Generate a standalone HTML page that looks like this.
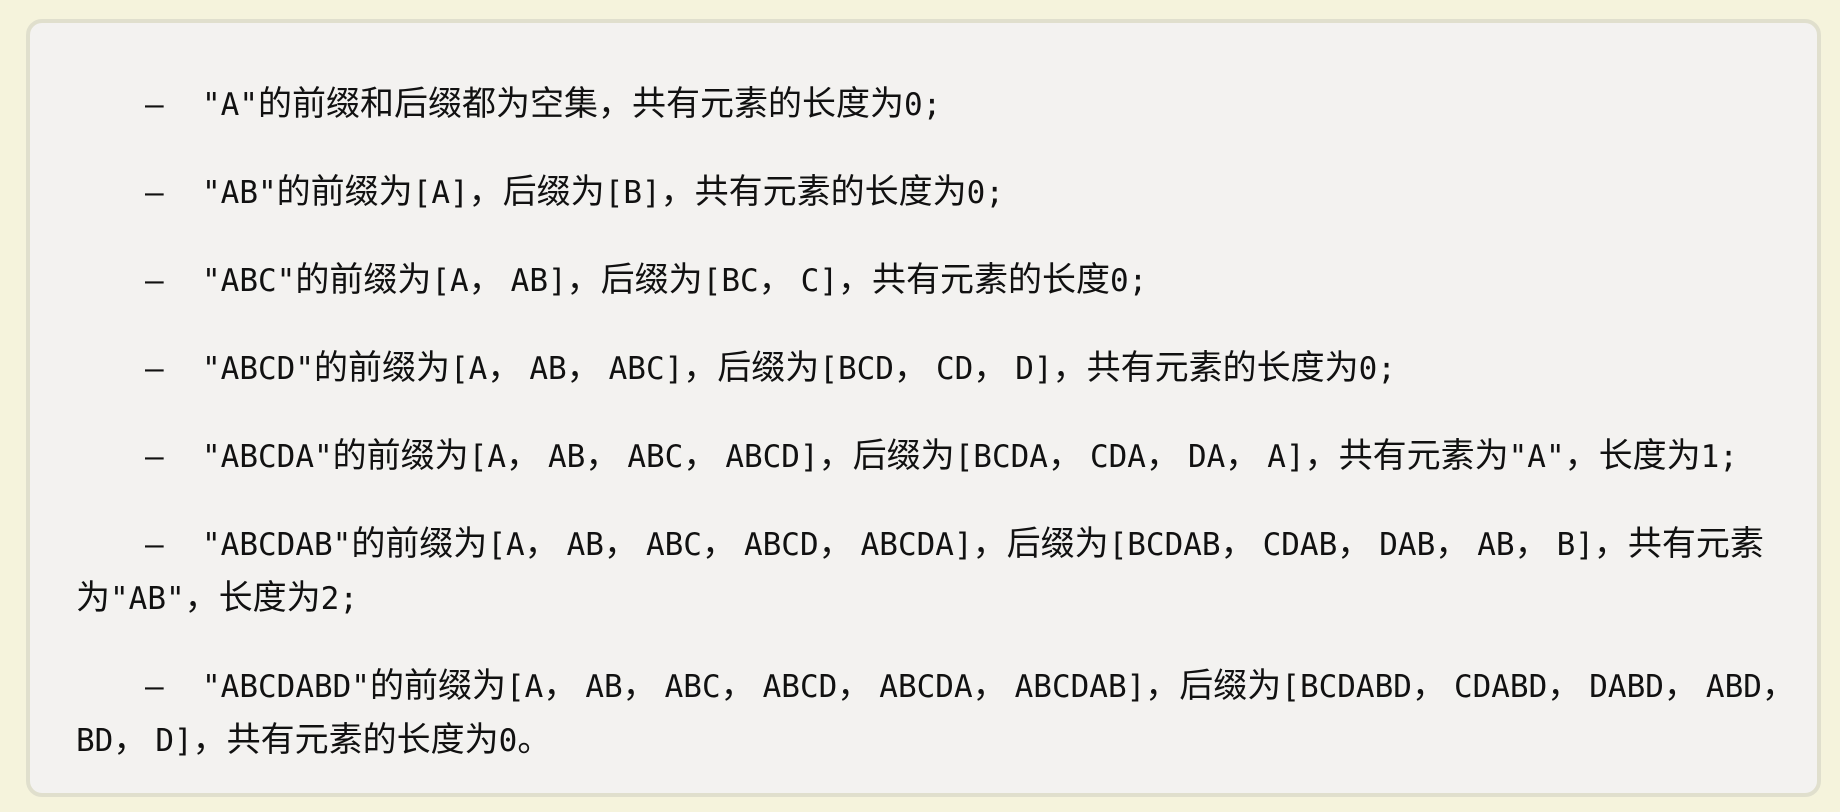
<!DOCTYPE html>
<html><head><meta charset="utf-8"><style>
html,body{margin:0;padding:0;background:#f5f3dc;width:1840px;height:812px;overflow:hidden}
.box{position:absolute;left:26px;top:19px;width:1787px;height:770px;background:#f3f2f0;border:4px solid #e0dfcd;border-radius:16px}
.t{position:absolute;left:76px;top:74px;font-family:"Noto Sans CJK SC",sans-serif;font-size:34px;color:#111;white-space:nowrap}
.t p{margin:0;height:54px;line-height:54px}
.t p.g{margin-bottom:34px}
.t p.w{height:108px}
i{font-style:normal;font-family:"DejaVu Sans Mono",monospace;font-size:31px;line-height:0}
b{display:inline-block;width:8px}
.d{display:inline-block;margin-left:69px;width:57px}
</style></head><body>
<div class="box"></div>
<div class="t">
<p class="g"><i class="d">–</i><i>"A"</i>的前缀和后缀都为空集，共有元素的长度为<i>0;</i></p>
<p class="g"><i class="d">–</i><i>"AB"</i>的前缀为<i>[A]</i>，后缀为<i>[B]</i>，共有元素的长度为<i>0;</i></p>
<p class="g"><i class="d">–</i><i>"ABC"</i>的前缀为<i>[A</i>，<b></b><i>AB]</i>，后缀为<i>[BC</i>，<b></b><i>C]</i>，共有元素的长度<i>0;</i></p>
<p class="g"><i class="d">–</i><i>"ABCD"</i>的前缀为<i>[A</i>，<b></b><i>AB</i>，<b></b><i>ABC]</i>，后缀为<i>[BCD</i>，<b></b><i>CD</i>，<b></b><i>D]</i>，共有元素的长度为<i>0;</i></p>
<p class="g"><i class="d">–</i><i>"ABCDA"</i>的前缀为<i>[A</i>，<b></b><i>AB</i>，<b></b><i>ABC</i>，<b></b><i>ABCD]</i>，后缀为<i>[BCDA</i>，<b></b><i>CDA</i>，<b></b><i>DA</i>，<b></b><i>A]</i>，共有元素为<i>"A"</i>，长度为<i>1;</i></p>
<p class="g w"><i class="d">–</i><i>"ABCDAB"</i>的前缀为<i>[A</i>，<b></b><i>AB</i>，<b></b><i>ABC</i>，<b></b><i>ABCD</i>，<b></b><i>ABCDA]</i>，后缀为<i>[BCDAB</i>，<b></b><i>CDAB</i>，<b></b><i>DAB</i>，<b></b><i>AB</i>，<b></b><i>B]</i>，共有元素<br>为<i>"AB"</i>，长度为<i>2;</i></p>
<p class="w"><i class="d">–</i><i>"ABCDABD"</i>的前缀为<i>[A</i>，<b></b><i>AB</i>，<b></b><i>ABC</i>，<b></b><i>ABCD</i>，<b></b><i>ABCDA</i>，<b></b><i>ABCDAB]</i>，后缀为<i>[BCDABD</i>，<b></b><i>CDABD</i>，<b></b><i>DABD</i>，<b></b><i>ABD</i>，<br><i>BD</i>，<b></b><i>D]</i>，共有元素的长度为<i>0</i>。</p>
</div>
</body></html>
